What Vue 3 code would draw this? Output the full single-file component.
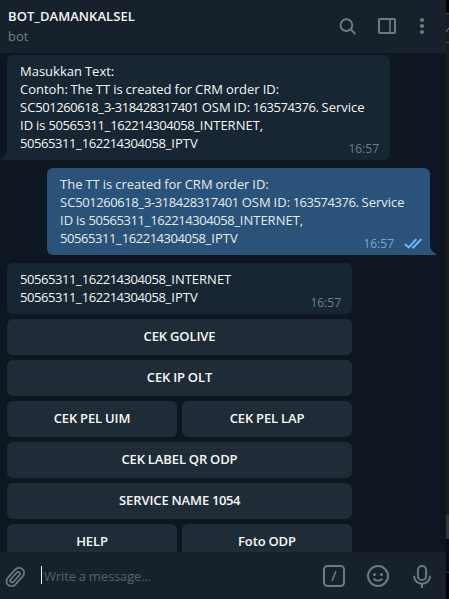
<script setup>
import { h } from 'vue'

const incoming = [
  'Masukkan Text:',
  'Contoh: The TT is created for CRM order ID:',
  'SC501260618_3-318428317401 OSM ID: 163574376. Service',
  'ID is 50565311_162214304058_INTERNET,',
  '50565311_162214304058_IPTV',
]
const outgoing = [
  'The TT is created for CRM order ID:',
  ...incoming.slice(2),
]
const reply = ['50565311_162214304058_INTERNET', '50565311_162214304058_IPTV']
const keyboard = [
  ['CEK GOLIVE'],
  ['CEK IP OLT'],
  ['CEK PEL UIM', 'CEK PEL LAP'],
  ['CEK LABEL QR ODP'],
  ['SERVICE NAME 1054'],
  ['HELP', 'Foto ODP'],
]

// Digits and punctuation are set tighter than letters.
const Copy = ({ text }) =>
  h(
    'span',
    { class: 'copy' },
    text
      .split(/([\d.:-]+)/)
      .filter(Boolean)
      .map((part) =>
        /^[\d.:-]/.test(part)
          ? h('span', { style: { letterSpacing: '-0.44px' } }, part)
          : part
      )
  )
Copy.props = ['text']
</script>

<template>
  <div class="window">
    <div class="chat">
      <header class="header">
        <div class="title">
          <div class="name">BOT_DAMANKALSEL</div>
          <div class="status">bot</div>
        </div>
        <svg class="icon search" width="18" height="18" viewBox="0 0 18 18">
          <circle cx="7.4" cy="7.1" r="5.9" />
          <path d="M11.7 11.4L16.4 16" />
        </svg>
        <svg class="icon panel" width="18" height="16" viewBox="0 0 18 16">
          <rect x="1" y="1" width="16" height="14" rx="0.8" />
          <path d="M12 1V15" />
        </svg>
        <svg class="dots" width="6" height="18" viewBox="0 0 6 18">
          <circle cx="3" cy="3" r="2.1" />
          <circle cx="3" cy="9" r="2.1" />
          <circle cx="3" cy="15" r="2.1" />
        </svg>
      </header>

      <main class="history">
        <div class="bubble in first">
          <div v-for="line in incoming" :key="line"><Copy :text="line" /></div>
          <span class="time">16:57</span>
          <svg class="tail tail-left" width="7" height="10" viewBox="0 0 7 10">
            <path d="M7 0V10H1C0.2 10 0.2 9.2 1 8.8C4.6 7 7 4 7 0Z" />
          </svg>
        </div>

        <div class="bubble out">
          <div v-for="line in outgoing" :key="line"><Copy :text="line" /></div>
          <span class="time">16:57
            <svg class="checks" width="19" height="11" viewBox="0 0 19 11">
              <path d="M1 6L4.6 9.4L12.4 1M8.2 8.6L9.4 9.4L17.4 1" />
            </svg>
          </span>
          <svg class="tail tail-right" width="7" height="10" viewBox="0 0 7 10">
            <path d="M0 0V10H6C6.8 10 6.8 9.2 6 8.8C2.4 7 0 4 0 0Z" />
          </svg>
        </div>

        <div class="bubble in reply">
          <div v-for="line in reply" :key="line"><Copy :text="line" /></div>
          <span class="time">16:57</span>
        </div>

        <div class="keyboard">
          <div v-for="(row, i) in keyboard" :key="i" class="row">
            <button v-for="label in row" :key="label" class="key"><Copy :text="label" /></button>
          </div>
        </div>
      </main>

      <footer class="composer">
        <svg class="icon clip" width="22" height="24" viewBox="0 0 22 24">
          <path
            transform="translate(10.5 11.8) rotate(42)"
            d="M-5 3V-5.4A5 5 0 0 1 5 -5.4V6A4.1 4.1 0 0 1 -5 6V3M-1.9 5V-4.6A2 2 0 0 1 1.9 -4.6V5A1.9 1.9 0 0 1 -1.9 5"
          />
        </svg>
        <div class="field"><Copy text="Write a message..." /></div>
        <svg class="icon command" width="22" height="22" viewBox="0 0 22 22">
          <rect x="1" y="1" width="20" height="20" rx="3.4" />
          <path d="M13 6L9 16" />
        </svg>
        <svg class="icon smile" width="22" height="22" viewBox="0 0 22 22">
          <circle cx="11" cy="11" r="10" />
          <path d="M6.6 13.6C8.6 16.6 13.4 16.6 15.4 13.6" />
          <circle class="eye" cx="7.5" cy="9.4" r="1.5" />
          <circle class="eye" cx="14.5" cy="9.4" r="1.5" />
        </svg>
        <svg class="icon mic" width="18" height="23" viewBox="0 0 18 23">
          <rect x="4.9" y="1" width="8.2" height="14" rx="4.1" />
          <path d="M1 10.8C1.2 21.4 16.8 21.4 17 10.8M9 18.8V23" />
        </svg>
      </footer>
    </div>

    <aside class="behind">
      <div class="strip-top"></div>
      <div class="strip-tab">
        <svg width="3" height="14" viewBox="0 0 3 14"><path d="M0 11L3 7" /></svg>
      </div>
      <div class="strip-body"></div>
      <div class="strip-thumb"></div>
      <div class="strip-dark"></div>
      <div class="strip-end"></div>
    </aside>
  </div>
</template>

<style>
body {
  margin: 0;
  background: #0e1621;
}
</style>

<style scoped>
.window {
  display: flex;
  width: 449px;
  height: 599px;
  overflow: hidden;
  background: #0e1621;
  font-family: "Open Sans", "Noto Sans", sans-serif;
  font-size: 13px;
  line-height: 18px;
  color: #f5f5f5;
}
.chat {
  display: flex;
  flex-direction: column;
  width: 446px;
  height: 599px;
}
.header {
  display: flex;
  align-items: flex-start;
  box-sizing: border-box;
  flex: none;
  height: 53px;
  padding: 7px 24px 0 8px;
  background: #17212b;
}
.title {
  flex: 1;
}
.name {
  font-weight: 600;
  line-height: 19px;
  letter-spacing: 0.06px;
}
.status {
  line-height: 20px;
  color: #6d7f8f;
}
.icon {
  flex: none;
  fill: none;
  stroke: #6c7883;
  stroke-width: 2;
}
.search {
  margin: 11px 21px 0 0;
}
.panel {
  margin: 11px 23px 0 0;
}
.panel path {
  stroke-width: 1.6;
}
.dots {
  flex: none;
  margin-top: 10px;
  margin-right: -3px;
  fill: #6c7883;
}
.history {
  display: flex;
  flex-direction: column;
  align-items: flex-start;
  flex: 1;
  min-height: 0;
  overflow: hidden;
  padding: 2px 0 0 7px;
}
.bubble {
  position: relative;
  box-sizing: border-box;
  width: 383px;
  padding: 7px 13px 8px;
  border-radius: 6px;
  white-space: nowrap;
  word-spacing: -0.38px;
}
.in {
  background: #182533;
}
.first {
  border-bottom-left-radius: 0;
}
.out {
  margin: 8px 0 8px 40px;
  background: #2b5278;
  border-bottom-right-radius: 0;
  color: #e4ecf2;
}
.reply {
  width: 345px;
}
.time {
  position: absolute;
  right: 11px;
  bottom: 2px;
  display: flex;
  align-items: center;
  font-size: 12px;
  color: #6d7f8f;
}
.out .time {
  right: 7px;
  color: #7da8d3;
}
.checks {
  margin: 0 0 2px 10px;
  fill: none;
  stroke: #65b9f4;
  stroke-width: 2;
}
.tail {
  position: absolute;
  bottom: 0;
}
.tail-left {
  left: -7px;
  fill: #182533;
}
.tail-right {
  right: -7px;
  fill: #2b5278;
}
.keyboard {
  display: flex;
  flex-direction: column;
  gap: 5px;
  width: 345px;
  margin-top: 5px;
}
.row {
  display: flex;
  gap: 5px;
}
.key {
  flex: 1 1 0;
  height: 36px;
  padding: 0 0 3px;
  border: 0;
  border-radius: 6px;
  background: #1f2c38;
  font: 600 13px/18px "Open Sans", "Noto Sans", sans-serif;
  letter-spacing: -0.1px;
  word-spacing: -0.38px;
  color: #f8f8f8;
}
.composer {
  display: flex;
  align-items: flex-start;
  box-sizing: border-box;
  flex: none;
  height: 47px;
  padding: 13px 15px 0 5px;
  background: #17212b;
}
.clip {
  stroke-width: 1.7;
}
.field {
  flex: 1;
  height: 18px;
  margin: 1px 0 0 14px;
  padding-left: 2px;
  border-left: 1px solid #f5f5f5;
  letter-spacing: -0.12px;
  word-spacing: -0.38px;
  color: #546370;
}
.field .copy,
.field span {
  position: relative;
  top: 1px;
}
.command {
  margin-right: 22px;
}
.command path {
  stroke-width: 1.6;
}
.smile {
  margin-right: 24px;
}
.eye {
  fill: #6c7883;
  stroke: none;
}
.behind {
  display: flex;
  flex-direction: column;
  width: 3px;
}
.strip-top {
  height: 13px;
  background: #000;
}
.strip-tab {
  display: flex;
  align-items: center;
  height: 28px;
  border-top: 1px solid #4a4a4a;
  border-bottom: 1px solid #4a4a4a;
  background: #1c1c1c;
}
.strip-tab path {
  stroke: #7c8894;
}
.strip-body {
  flex: 1;
  background: #1c1c1c;
}
.strip-thumb {
  height: 24px;
  background: #343434;
}
.strip-dark {
  height: 33px;
  background: #0b0d10;
}
.strip-end {
  height: 26px;
  border-top: 1px solid #343434;
  background: #020304;
}
</style>
